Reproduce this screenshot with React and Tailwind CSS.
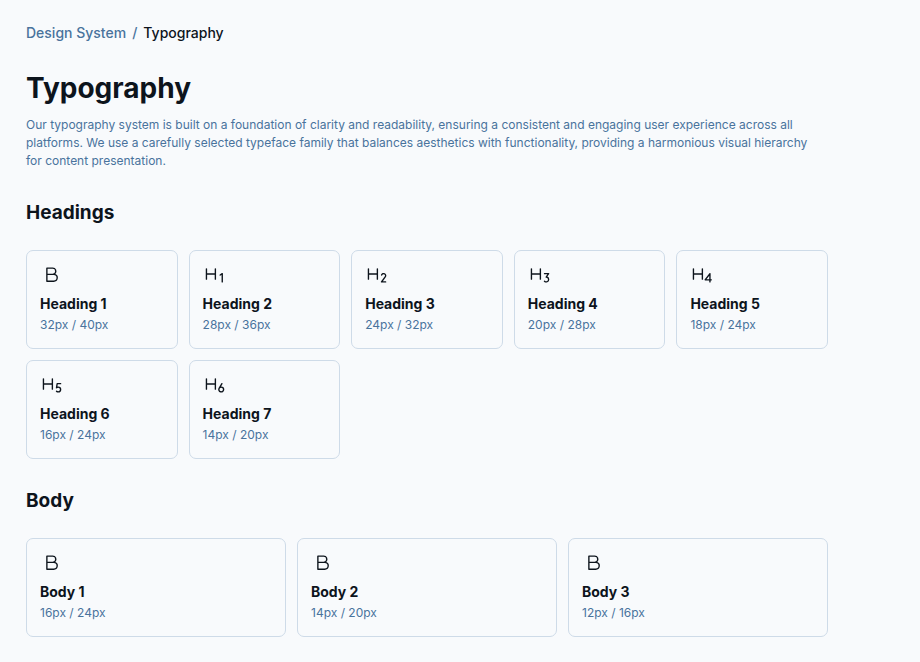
import {
  PiTextB,
  PiTextHOne,
  PiTextHTwo,
  PiTextHThree,
  PiTextHFour,
  PiTextHFive,
  PiTextHSix,
} from "react-icons/pi";

const headings = [
  { icon: PiTextB, name: "Heading 1", size: "32px / 40px" },
  { icon: PiTextHOne, name: "Heading 2", size: "28px / 36px" },
  { icon: PiTextHTwo, name: "Heading 3", size: "24px / 32px" },
  { icon: PiTextHThree, name: "Heading 4", size: "20px / 28px" },
  { icon: PiTextHFour, name: "Heading 5", size: "18px / 24px" },
  { icon: PiTextHFive, name: "Heading 6", size: "16px / 24px" },
  { icon: PiTextHSix, name: "Heading 7", size: "14px / 20px" },
];

const bodies = [
  { icon: PiTextB, name: "Body 1", size: "16px / 24px" },
  { icon: PiTextB, name: "Body 2", size: "14px / 20px" },
  { icon: PiTextB, name: "Body 3", size: "12px / 16px" },
];

function StyleCard({ icon: Icon, name, size }) {
  return (
    <li className="flex flex-col gap-[9px] rounded-[7px] border border-[#cedbe8] bg-[#f8fafc] px-[13px] pt-[13px] pb-[14px]">
      <Icon aria-hidden="true" className="size-[22px]" />
      <div className="flex flex-col gap-[2px]">
        <h3 className="text-[14px] leading-[18px] font-bold">{name}</h3>
        <p className="text-[12px] leading-[19px] text-[#49739c]">{size}</p>
      </div>
    </li>
  );
}

function Section({ title, items, columns }) {
  return (
    <section>
      <h2 className="pt-[29px] pb-[25px] text-[19px] leading-[25px] font-bold">{title}</h2>
      <ul className={`grid gap-[11px] ${columns}`}>
        {items.map((item) => (
          <StyleCard key={item.name} {...item} />
        ))}
      </ul>
    </section>
  );
}

export default function App() {
  return (
    <div className="min-h-screen bg-[#f8fafc] px-[26px] py-[22px] font-['Inter','Noto_Sans',sans-serif] text-[#0d141c]">
      <main className="w-full max-w-[802px]">
        <nav aria-label="Breadcrumb">
          <ol className="flex gap-[6px] text-[14px] leading-[22px] font-medium">
            <li>
              <a href="#design-system" className="text-[#49739c]">Design System</a>
            </li>
            <li aria-hidden="true" className="text-[#49739c]">/</li>
            <li aria-current="page">Typography</li>
          </ol>
        </nav>
        <h1 className="pt-[26px] text-[28px] leading-[36px] font-bold">Typography</h1>
        <p className="max-w-[790px] pt-[10px] pb-px text-[12px] leading-[18px] text-[#49739c]">
          Our typography system is built on a foundation of clarity and readability, ensuring a
          consistent and engaging user experience across all platforms. We use a carefully selected
          typeface family that balances aesthetics with functionality, providing a harmonious visual
          hierarchy for content presentation.
        </p>
        <Section title="Headings" items={headings} columns="grid-cols-5" />
        <Section title="Body" items={bodies} columns="grid-cols-3" />
      </main>
    </div>
  );
}
